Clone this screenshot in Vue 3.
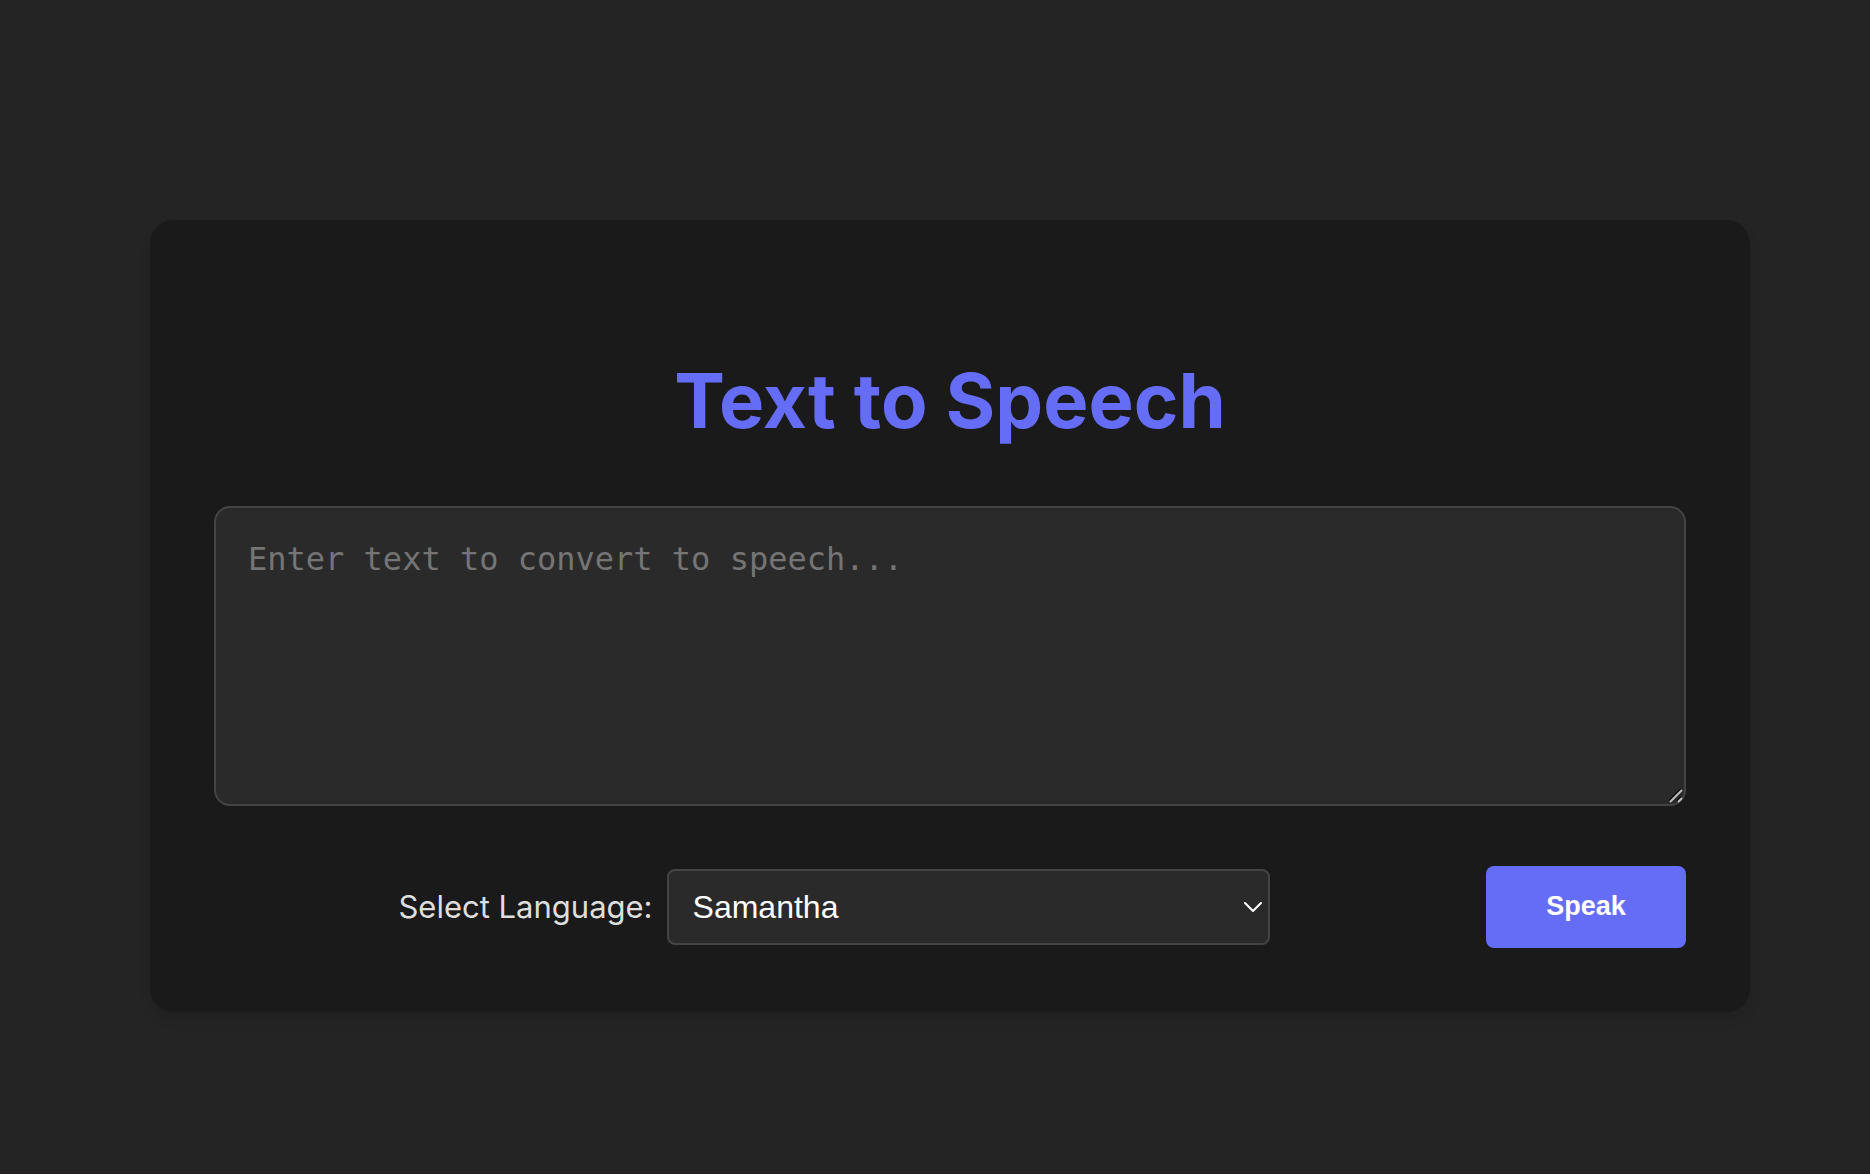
<script setup>
import { ref } from 'vue'

const text = ref('')
const voice = ref('Samantha')
const voices = ['Samantha']

function speak() {
  if (!text.value || !window.speechSynthesis) return
  window.speechSynthesis.speak(new SpeechSynthesisUtterance(text.value))
}
</script>

<template>
  <main class="page">
    <form class="card" @submit.prevent="speak">
      <h1 class="title">Text to Speech</h1>
      <div class="editor">
        <textarea
          v-model="text"
          class="input"
          aria-label="Text to convert"
          placeholder="Enter text to convert to speech..."
        ></textarea>
        <svg class="grip" viewBox="0 0 18 18" aria-hidden="true">
          <path class="grip-shade" d="M3 15 15 3M11 15l4-4" />
          <path class="grip-line" d="M4 16 16 4M12 16l4-4" />
        </svg>
      </div>
      <div class="controls">
        <div class="language">
          <label class="label" for="voice">Select Language:</label>
          <div class="picker">
            <select id="voice" v-model="voice" class="select">
              <option v-for="name in voices" :key="name">{{ name }}</option>
            </select>
            <svg class="chevron" viewBox="0 0 20 12" aria-hidden="true">
              <path d="M2 2l8 8 8-8" />
            </svg>
          </div>
        </div>
        <button class="speak" type="submit">Speak</button>
      </div>
    </form>
  </main>
</template>

<style>
body {
  margin: 0;
  background: #242424;
}
</style>

<style scoped>
.page {
  box-sizing: border-box;
  min-height: 100vh;
  padding: 220px 120px 0 150px;
  border-bottom: 1px solid #231c1f;
  color: #dedede;
  font-family: Inter, "Liberation Sans", sans-serif;
}

.card {
  padding: 64px;
  border-radius: 24px;
  background: #1a1a1a;
  box-shadow: 0 8px 12px rgba(0, 0, 0, 0.1);
}

.title {
  margin: 68px 0 58px;
  color: #656df6;
  font-size: 76px;
  font-weight: 700;
  line-height: 96px;
  text-align: center;
}

.editor {
  position: relative;
  display: flex;
}

.input {
  box-sizing: border-box;
  width: 100%;
  height: 300px;
  padding: 32px;
  border: 2px solid #444;
  border-radius: 16px;
  outline: none;
  background: #2a2a2a;
  color: #fff;
  font-family: "DejaVu Sans Mono", monospace;
  font-size: 32px;
  line-height: 38px;
  resize: vertical;
}

.input::placeholder {
  color: #757575;
  opacity: 1;
}

.input::-webkit-resizer {
  display: none;
}

.grip {
  position: absolute;
  right: 2px;
  bottom: 2px;
  width: 18px;
  height: 18px;
  fill: none;
  stroke-width: 2;
  pointer-events: none;
}

.grip-shade {
  stroke: #101010;
}

.grip-line {
  stroke: #bdbdbd;
}

.controls {
  display: flex;
  align-items: center;
  gap: 32px;
  margin-top: 60px;
}

.language {
  display: flex;
  flex: 1;
  align-items: center;
  justify-content: center;
  gap: 14px;
}

.label {
  font-size: 31px;
  line-height: 48px;
}

.picker {
  position: relative;
  display: flex;
  width: 603px;
}

.select {
  width: 100%;
  height: 76px;
  padding: 0 48px 0 24px;
  border: 2px solid #444;
  border-radius: 8px;
  outline: none;
  appearance: none;
  background: #2a2a2a;
  color: #fff;
  font-family: "Liberation Sans", Arial, sans-serif;
  font-size: 32px;
}

.chevron {
  position: absolute;
  top: 32px;
  right: 7px;
  width: 20px;
  height: 12px;
  fill: none;
  stroke: #fff;
  stroke-width: 2;
  stroke-linecap: round;
  stroke-linejoin: round;
  pointer-events: none;
}

.speak {
  width: 200px;
  height: 82px;
  padding: 0 0 2px;
  border: 0;
  border-radius: 8px;
  background: #656df6;
  color: #fff;
  cursor: pointer;
  font-family: "Liberation Sans", Arial, sans-serif;
  font-size: 27px;
  font-weight: 700;
}
</style>
